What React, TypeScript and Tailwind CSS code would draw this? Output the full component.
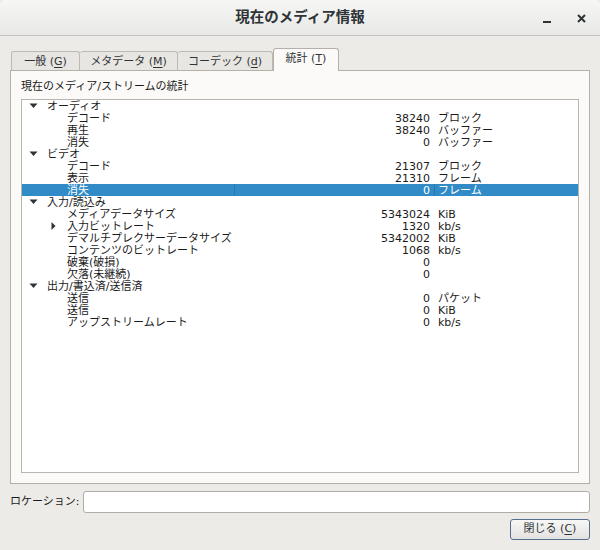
import React from 'react';

// ---------------------------------------------------------------------------
// Tree data
// ---------------------------------------------------------------------------

type Row = {
  label: string;
  level: 0 | 1;
  expander?: 'open' | 'closed';
  value?: string;
  unit?: string;
  selected?: boolean;
};

const rows: Row[] = [
  { label: 'オーディオ', level: 0, expander: 'open' },
  { label: 'デコード', level: 1, value: '38240', unit: 'ブロック' },
  { label: '再生', level: 1, value: '38240', unit: 'バッファー' },
  { label: '消失', level: 1, value: '0', unit: 'バッファー' },
  { label: 'ビデオ', level: 0, expander: 'open' },
  { label: 'デコード', level: 1, value: '21307', unit: 'ブロック' },
  { label: '表示', level: 1, value: '21310', unit: 'フレーム' },
  { label: '消失', level: 1, value: '0', unit: 'フレーム', selected: true },
  { label: '入力/読込み', level: 0, expander: 'open' },
  { label: 'メディアデータサイズ', level: 1, value: '5343024', unit: 'KiB' },
  { label: '入力ビットレート', level: 1, expander: 'closed', value: '1320', unit: 'kb/s' },
  { label: 'デマルチプレクサーデータサイズ', level: 1, value: '5342002', unit: 'KiB' },
  { label: 'コンテンツのビットレート', level: 1, value: '1068', unit: 'kb/s' },
  { label: '破棄(破損)', level: 1, value: '0' },
  { label: '欠落(未継続)', level: 1, value: '0' },
  { label: '出力/書込済/送信済', level: 0, expander: 'open' },
  { label: '送信', level: 1, value: '0', unit: 'パケット' },
  { label: '送信', level: 1, value: '0', unit: 'KiB' },
  { label: 'アップストリームレート', level: 1, value: '0', unit: 'kb/s' },
];

const tabs = [
  { label: '一般', key: 'G', width: 'w-[69px]' },
  { label: 'メタデータ', key: 'M', width: 'w-[98px]' },
  { label: 'コーデック', key: 'd', width: 'w-[95px]' },
  { label: '統計', key: 'T', width: 'w-[66px]', active: true },
];

function Expander({ kind }: { kind?: 'open' | 'closed' }) {
  if (kind === 'open') {
    return (
      <svg width="9" height="6" viewBox="0 0 9 6" className="mt-[3px]">
        <polygon points="0.5,0.5 8.5,0.5 4.5,5" fill="#2e3436" />
      </svg>
    );
  }
  if (kind === 'closed') {
    return (
      <svg width="5" height="8" viewBox="0 0 5 8" className="ml-[2px] mt-[2px]">
        <polygon points="0.5,0 4.5,4 0.5,8" fill="#2e3436" />
      </svg>
    );
  }
  return null;
}

function TreeRow({ row }: { row: Row }) {
  const sel = !!row.selected;
  return (
    <div
      className={`flex h-[12px] leading-[12px] whitespace-nowrap ${
        sel ? 'bg-[#308bc6] text-white' : 'text-[#1a1a1a]'
      }`}
    >
      <div
        className={`flex w-[212px] shrink-0 items-start ${
          row.level === 0 ? 'pl-[7px]' : 'pl-[27px]'
        }`}
      >
        <div className="flex h-[12px] w-[18px] shrink-0 items-start">
          <Expander kind={row.expander} />
        </div>
        <span className="relative top-[1px]">{row.label}</span>
      </div>
      <div
        className={`w-[200px] shrink-0 pr-[4px] text-right ${
          sel ? 'border-l border-[#2a79ae]' : 'border-l border-transparent'
        }`}
      >
        <span className="relative top-[1px]">{row.value}</span>
      </div>
      <div
        className={`flex-1 pl-[3px] ${
          sel ? 'border-l border-[#2a79ae]' : 'border-l border-transparent'
        }`}
      >
        <span className="relative top-[1px]">{row.unit}</span>
      </div>
    </div>
  );
}

export default function App() {
  return (
    <div className="flex h-[550px] w-[600px] flex-col overflow-hidden bg-[#edebe8] font-['DejaVu_Sans','Noto_Sans_CJK_JP',sans-serif] text-[#1a1a1a]">
      {/* Title bar */}
      <div className="relative flex h-[36px] shrink-0 items-center justify-center rounded-t-[5px] border-b border-[#c4c2be] bg-gradient-to-b from-[#f6f6f5] to-[#e8e8e7]">
        <span className="text-[14.5px] font-bold text-[#2e3436]">現在のメディア情報</span>
        <div className="absolute right-[14px] top-[13px] flex items-center gap-[26px]">
          <div className="mt-[8px] h-[2px] w-[8px] bg-[#2e3436]" />
          <svg width="9" height="9" viewBox="0 0 9 9">
            <path d="M1 1 L8 8 M8 1 L1 8" stroke="#2e3436" strokeWidth="2" />
          </svg>
        </div>
      </div>

      <div className="flex flex-1 flex-col px-[10px] pt-[12px]">
        {/* Tabs */}
        <div className="relative z-10 flex h-[22px] items-end pl-[1px]">
          {tabs.map((t) =>
            t.active ? (
              <div
                key={t.key}
                className={`${t.width} -mb-px flex h-[23px] items-center justify-center rounded-t-[3px] border border-b-0 border-[#b4b0aa] bg-[#fcfaf8] pb-[1px] text-[11px] text-[#2e3436]`}
              >
                {t.label} (<span className="underline underline-offset-2">{t.key}</span>)
              </div>
            ) : (
              <div
                key={t.key}
                className={`${t.width} flex h-[19px] items-center justify-center rounded-t-[3px] border border-b-0 border-[#bdb9b3] bg-[#e8e6e2] pt-[2px] text-[11px] text-[#2e3436] [&+&]:border-l-0`}
              >
                {t.label} (<span className="underline underline-offset-2">{t.key}</span>)
              </div>
            )
          )}
        </div>

        {/* Panel */}
        <div className="flex h-[414px] flex-col border border-[#b4b0aa] bg-[#fcfaf8] px-[10px] pt-[9px] pb-[10px]">
          <div className="h-[19px] text-[11px] leading-[14px] text-[#1a1a1a]">
            現在のメディア/ストリームの統計
          </div>
          <div className="flex-1 border border-[#b9b5af] bg-white text-[11px]">
            {rows.map((r, i) => (
              <TreeRow key={i} row={r} />
            ))}
          </div>
        </div>

        {/* Location */}
        <div className="mt-[7px] flex h-[22px] items-center">
          <span className="w-[73px] shrink-0 text-[11px] text-[#1a1a1a]">ロケーション:</span>
          <div className="h-[22px] flex-1 rounded-[3px] border border-[#b0aca6] bg-white" />
        </div>

        {/* Buttons */}
        <div className="mt-[6px] flex justify-end">
          <button className="flex h-[21px] w-[80px] items-center justify-center rounded-[3px] border border-[#536f8c] bg-gradient-to-b from-[#f7f7f6] to-[#e3e2e0] text-[11px] text-[#2e3436]">
            閉じる (<span className="underline underline-offset-2">C</span>)
          </button>
        </div>
      </div>
    </div>
  );
}
